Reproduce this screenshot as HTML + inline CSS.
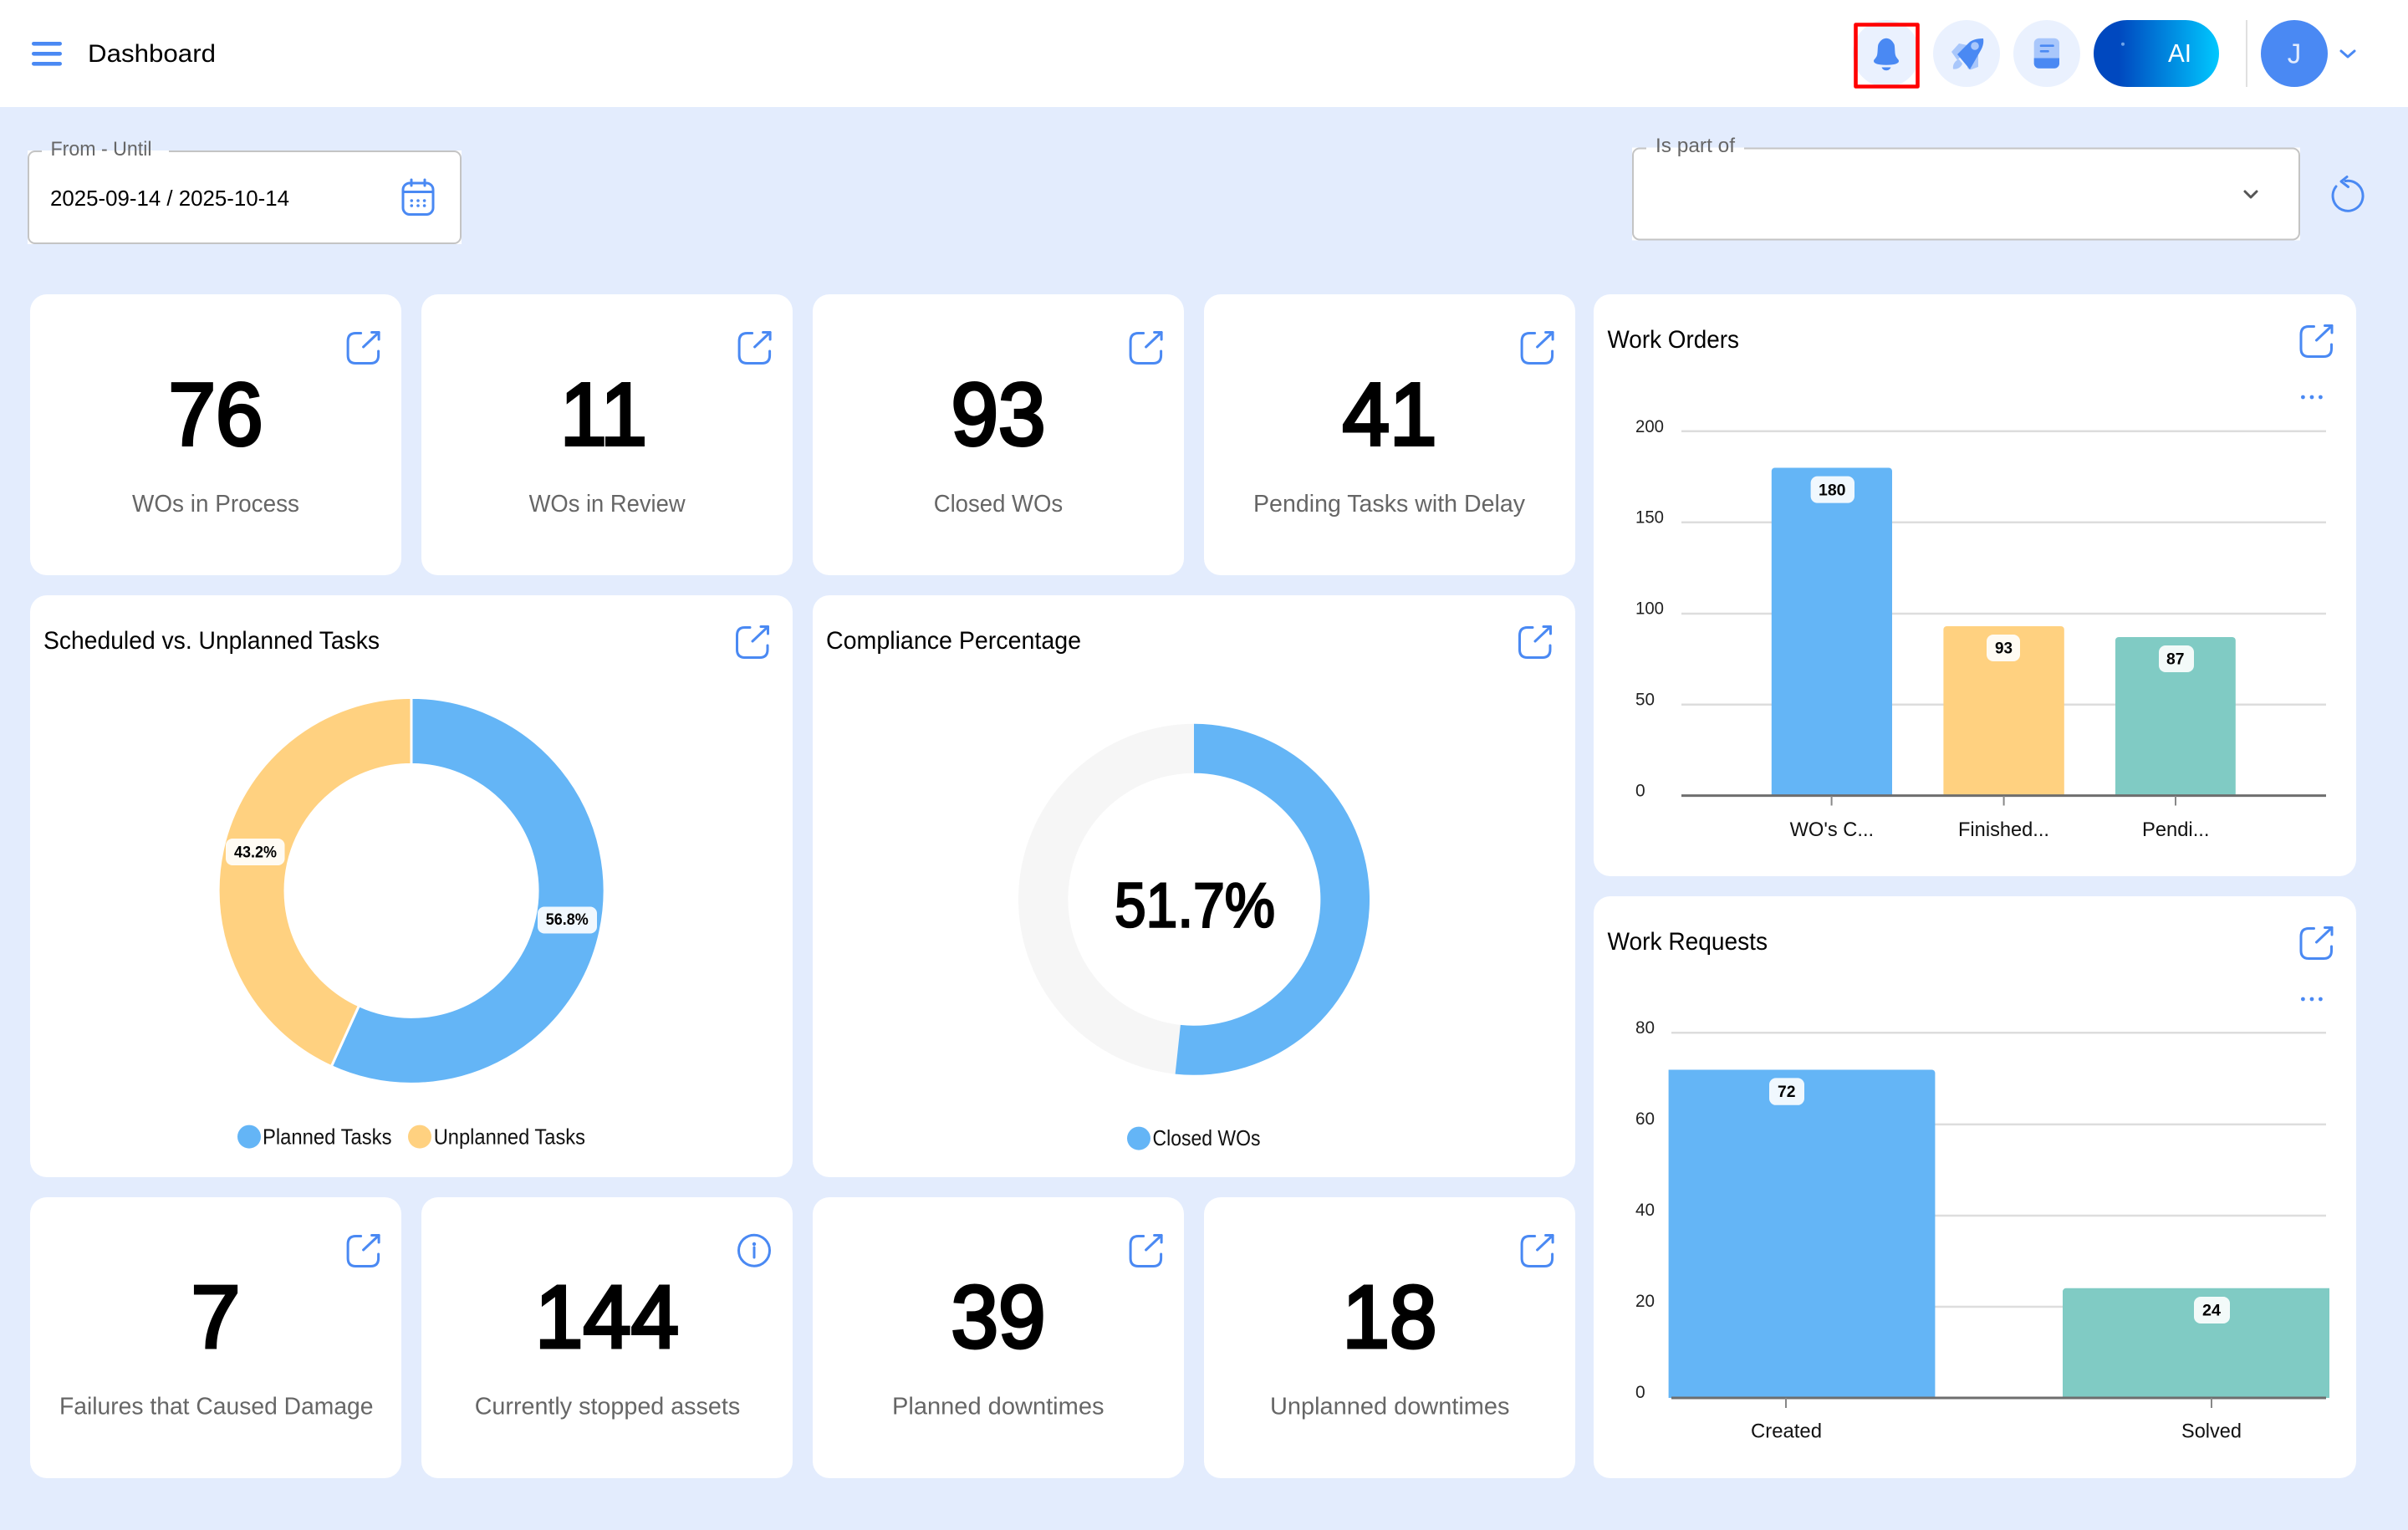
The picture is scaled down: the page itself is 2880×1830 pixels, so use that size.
<!DOCTYPE html>
<html><head><meta charset="utf-8"><title>Dashboard</title>
<style>
html,body{margin:0;padding:0;width:2880px;height:1830px;overflow:hidden;background:#E3ECFD}
svg{display:block}
text{font-family:"Liberation Sans",sans-serif;fill:#000}
.num{font-size:106px;font-weight:400;text-anchor:middle;stroke:#000;stroke-width:4}
.lab{font-size:29px;fill:#666;text-anchor:start}
.ttl{font-size:30px}
.y{font-size:21px;fill:#222}
.x{font-size:24px;fill:#111}
.v{font-size:19.5px;font-weight:700}
.leg{font-size:26px;fill:#111}
.ic{fill:none;stroke:#4A89F3;stroke-width:3;stroke-linecap:round;stroke-linejoin:round}
.grid{stroke:#DDDDDD;stroke-width:2.5}
.tick{stroke:#888;stroke-width:2}
.chip{fill:#fff;fill-opacity:.9}
</style></head><body>
<svg width="2880" height="1830" viewBox="0 0 2880 1830" xmlns="http://www.w3.org/2000/svg">
<defs>
<linearGradient id="ai" x1="0" y1="0" x2="1" y2="0"><stop offset=".2" stop-color="#0048BF"/><stop offset="1" stop-color="#00C8FF"/></linearGradient>
<g id="ext" class="ic"><path d="M17,2.5H11Q1.5,2.5 1.5,12V29Q1.5,38.5 11,38.5H28.5Q38,38.5 38,29V24"/><path d="M20,19L38.5,1.5"/><path d="M30,1.5H38.5V10"/></g>
</defs>

<!-- header -->
<rect width="2880" height="128" fill="#fff"/>
<g fill="#4A89F3"><rect x="38" y="50" width="36" height="4.6" rx="2.3"/><rect x="38" y="62" width="36" height="4.6" rx="2.3"/><rect x="38" y="74" width="36" height="4.6" rx="2.3"/></g>
<text x="105" y="74" font-size="30" textLength="153" lengthAdjust="spacingAndGlyphs">Dashboard</text>

<circle cx="2256" cy="64" r="40" fill="#EAF1FE"/>
<path d="M2256,45.7C2251,45.7 2248,50 2246.5,53C2245.5,56 2246,62 2245,66C2244,69.5 2241,71 2241,73C2241,76 2246,77.7 2256,77.7C2266,77.7 2271,76 2271,73C2271,71 2268,69.5 2267,66C2266,62 2266.5,56 2265.5,53C2264,50 2261,45.7 2256,45.7Z" fill="#4A89F3"/>
<path d="M2250.5,80.5H2261.5C2260.5,83 2258.5,84.2 2256,84.2C2253.5,84.2 2251.5,83 2250.5,80.5Z" fill="#4A89F3"/>
<rect x="2219.5" y="29.5" width="74" height="74" fill="none" stroke="#FF0000" stroke-width="4.6" stroke-linejoin="round"/>

<circle cx="2352" cy="64" r="40" fill="#EAF1FE"/>
<path d="M2334,62L2343,52L2358,55L2341,72Z M2353,79L2366,66L2366,80L2358,83C2355,84 2353,82 2353,79Z M2336,82.5C2335,76 2340,71.5 2343,71L2347,76C2346,80 2341,83.5 2336,82.5Z" fill="#A9C7FB"/>
<path d="M2372,46C2364,46 2358,48 2355,51L2341,65L2356,83L2368,62C2371,57 2373,52 2372,46Z" fill="#4A89F3"/>
<circle cx="2362" cy="55" r="4.8" fill="#A9C7FB"/>

<circle cx="2448" cy="64" r="40" fill="#EAF1FE"/>
<rect x="2432.7" y="45.7" width="30.3" height="36" rx="6" fill="#A9C7FB"/>
<path d="M2432.7,69.5H2463V75.7A6,6 0 0 1 2457,81.7H2438.7A6,6 0 0 1 2432.7,75.7Z" fill="#4A89F3"/>
<path d="M2441,54.7H2455.5M2441,61.3H2449.5" stroke="#4A89F3" stroke-width="2.6" stroke-linecap="round"/>

<rect x="2504" y="24" width="150" height="80" rx="40" fill="url(#ai)"/>
<circle cx="2539" cy="52.7" r="2" fill="#6FA4E8"/>
<text x="2593" y="74" font-size="31" style="fill:#fff" textLength="28" lengthAdjust="spacingAndGlyphs">AI</text>
<rect x="2686" y="24" width="2" height="80" fill="#E0E0E0"/>
<circle cx="2744" cy="64" r="40" fill="#4A89F3"/>
<text x="2744" y="75.5" font-size="33" style="fill:#E3ECFD" text-anchor="middle">J</text>
<path d="M2800,61L2808,68L2816,61" fill="none" stroke="#4A89F3" stroke-width="3" stroke-linecap="round" stroke-linejoin="round"/>

<!-- filters -->
<rect x="33" y="180" width="519" height="112" fill="#fff"/>
<rect x="34" y="181" width="517" height="110" rx="8" fill="#fff" stroke="#C4C4C4" stroke-width="2"/>
<rect x="50" y="178" width="152" height="6" fill="#fff"/>
<rect x="50" y="178" width="152" height="2" fill="#E3ECFD"/>
<text x="60.5" y="186" class="lab" style="font-size:24px" textLength="121" lengthAdjust="spacingAndGlyphs">From - Until</text>
<text x="60" y="246" font-size="26" textLength="286" lengthAdjust="spacingAndGlyphs">2025-09-14 / 2025-10-14</text>
<g class="ic"><rect x="482" y="219" width="36" height="37.5" rx="8"/><path d="M482,229.5H518M492,215V222M508,215V222"/></g>
<g fill="#4A89F3"><circle cx="492.3" cy="240" r="1.8"/><circle cx="500" cy="240" r="1.8"/><circle cx="507.6" cy="240" r="1.8"/><circle cx="492.3" cy="246" r="1.8"/><circle cx="500" cy="246" r="1.8"/><circle cx="507.6" cy="246" r="1.8"/></g>

<rect x="1952" y="176.5" width="799" height="111" fill="#fff"/>
<rect x="1953" y="177.5" width="797" height="109" rx="8" fill="#fff" stroke="#C4C4C4" stroke-width="2"/>
<rect x="1969" y="176.5" width="117" height="4" fill="#fff"/>
<text x="1980" y="182" class="lab" style="font-size:24px" textLength="95" lengthAdjust="spacingAndGlyphs">Is part of</text>
<path d="M2685,229L2692,236L2699,229" fill="none" stroke="#555" stroke-width="3" stroke-linecap="round" stroke-linejoin="round"/>
<g class="ic"><path d="M2794,223A18,18 0 1 0 2805,216.5"/><path d="M2807,211.5L2800,217L2808.5,223.5"/></g>

<!-- cards -->
<g fill="#fff">
<rect x="36" y="352" width="444" height="336" rx="20"/><rect x="504" y="352" width="444" height="336" rx="20"/><rect x="972" y="352" width="444" height="336" rx="20"/><rect x="1440" y="352" width="444" height="336" rx="20"/>
<rect x="36" y="712" width="912" height="696" rx="20"/><rect x="972" y="712" width="912" height="696" rx="20"/>
<rect x="36" y="1432" width="444" height="336" rx="20"/><rect x="504" y="1432" width="444" height="336" rx="20"/><rect x="972" y="1432" width="444" height="336" rx="20"/><rect x="1440" y="1432" width="444" height="336" rx="20"/>
<rect x="1906" y="352" width="912" height="696" rx="20"/><rect x="1906" y="1072" width="912" height="696" rx="20"/>
</g>
<use href="#ext" x="414.6" y="396"/><use href="#ext" x="882.6" y="396"/><use href="#ext" x="1350.6" y="396"/><use href="#ext" x="1818.6" y="396"/>
<use href="#ext" x="414.6" y="1476"/><use href="#ext" x="1350.6" y="1476"/><use href="#ext" x="1818.6" y="1476"/>
<g class="ic"><circle cx="902" cy="1495.7" r="18.5"/><path d="M902,1492V1504"/></g><circle cx="902" cy="1488" r="2.2" fill="#4A89F3"/>
<use href="#ext" x="880" y="748"/><use href="#ext" x="1816" y="748"/><use href="#ext" x="2750.5" y="388"/><use href="#ext" x="2750.5" y="1108"/>

<text x="258" y="532" class="num" textLength="113" lengthAdjust="spacingAndGlyphs">76</text>
<text x="722" y="532" class="num" textLength="104" lengthAdjust="spacingAndGlyphs">11</text>
<text x="1194" y="532" class="num" textLength="113" lengthAdjust="spacingAndGlyphs">93</text>
<text x="1662" y="532" class="num" textLength="113" lengthAdjust="spacingAndGlyphs">41</text>
<text x="258" y="1611.5" class="num">7</text>
<text x="726" y="1611.5" class="num" textLength="172" lengthAdjust="spacingAndGlyphs">144</text>
<text x="1194" y="1611.5" class="num" textLength="113" lengthAdjust="spacingAndGlyphs">39</text>
<text x="1662" y="1611.5" class="num" textLength="113" lengthAdjust="spacingAndGlyphs">18</text>

<text x="158" y="612" class="lab" textLength="200" lengthAdjust="spacingAndGlyphs">WOs in Process</text>
<text x="632.6" y="612" class="lab" textLength="187" lengthAdjust="spacingAndGlyphs">WOs in Review</text>
<text x="1116.7" y="612" class="lab" textLength="154.5" lengthAdjust="spacingAndGlyphs">Closed WOs</text>
<text x="1499" y="612" class="lab" textLength="325" lengthAdjust="spacingAndGlyphs">Pending Tasks with Delay</text>
<text x="71" y="1691.6" class="lab" textLength="375.5" lengthAdjust="spacingAndGlyphs">Failures that Caused Damage</text>
<text x="567.7" y="1691.6" class="lab" textLength="317.5" lengthAdjust="spacingAndGlyphs">Currently stopped assets</text>
<text x="1067" y="1691.6" class="lab" textLength="253.5" lengthAdjust="spacingAndGlyphs">Planned downtimes</text>
<text x="1519" y="1691.6" class="lab" textLength="286.5" lengthAdjust="spacingAndGlyphs">Unplanned downtimes</text>

<!-- titles -->
<text x="52" y="776" class="ttl" textLength="402" lengthAdjust="spacingAndGlyphs">Scheduled vs. Unplanned Tasks</text>
<text x="988" y="776" class="ttl" textLength="305" lengthAdjust="spacingAndGlyphs">Compliance Percentage</text>
<text x="1922.5" y="416" class="ttl" textLength="157.5" lengthAdjust="spacingAndGlyphs">Work Orders</text>
<text x="1922.5" y="1136" class="ttl" textLength="191.5" lengthAdjust="spacingAndGlyphs">Work Requests</text>

<!-- donut 1 -->
<path d="M492,834.4A231,231 0 1 1 396.3,1275.6L429.4,1202.8A151,151 0 1 0 492,914.4Z" fill="#64B5F6" stroke="#fff" stroke-width="3"/>
<path d="M396.3,1275.6A231,231 0 0 1 492,834.4L492,914.4A151,151 0 0 0 429.4,1202.8Z" fill="#FFD180" stroke="#fff" stroke-width="3"/>
<rect x="270" y="1003" width="70.5" height="32" rx="8" class="chip"/>
<text x="280" y="1025.5" class="v" textLength="51" lengthAdjust="spacingAndGlyphs">43.2%</text>
<rect x="643" y="1084.5" width="71" height="32" rx="8" class="chip"/>
<text x="652.8" y="1106.2" class="v" textLength="51" lengthAdjust="spacingAndGlyphs">56.8%</text>
<circle cx="298" cy="1359.6" r="14" fill="#64B5F6"/>
<text x="314" y="1368.5" class="leg" textLength="154.5" lengthAdjust="spacingAndGlyphs">Planned Tasks</text>
<circle cx="502" cy="1359.6" r="14" fill="#FFD180"/>
<text x="518.7" y="1368.5" class="leg" textLength="181.3" lengthAdjust="spacingAndGlyphs">Unplanned Tasks</text>

<!-- donut 2 -->
<path d="M1428,865.8A210,210 0 0 0 1405.6,1284.6L1411.9,1225.9A151,151 0 0 1 1428,924.8Z" fill="#F6F6F6"/>
<path d="M1428,865.8A210,210 0 1 1 1405.6,1284.6L1411.9,1225.9A151,151 0 1 0 1428,924.8Z" fill="#64B5F6"/>
<text x="1333" y="1108.5" font-size="75" stroke="#000" stroke-width="2.6" textLength="192" lengthAdjust="spacingAndGlyphs">51.7%</text>
<circle cx="1362" cy="1361.6" r="14" fill="#64B5F6"/>
<text x="1378.5" y="1370" class="leg" textLength="129" lengthAdjust="spacingAndGlyphs">Closed WOs</text>

<!-- work orders -->
<g fill="#4A89F3"><circle cx="2754.4" cy="475" r="2.4"/><circle cx="2765" cy="475" r="2.4"/><circle cx="2775.4" cy="475" r="2.4"/><circle cx="2754.4" cy="1195" r="2.4"/><circle cx="2765" cy="1195" r="2.4"/><circle cx="2775.4" cy="1195" r="2.4"/></g>
<path class="grid" d="M2011,515.8H2782M2011,624.7H2782M2011,734H2782M2011,842.8H2782"/>
<text x="1956" y="516.8" class="y" textLength="34" lengthAdjust="spacingAndGlyphs">200</text>
<text x="1956" y="625.6" class="y" textLength="34" lengthAdjust="spacingAndGlyphs">150</text>
<text x="1956" y="734.5" class="y" textLength="34" lengthAdjust="spacingAndGlyphs">100</text>
<text x="1956" y="843.7" class="y" textLength="23" lengthAdjust="spacingAndGlyphs">50</text>
<text x="1956" y="952.5" class="y">0</text>
<path d="M2118.8,951.6V563.5a4,4 0 0 1 4,-4H2259a4,4 0 0 1 4,4V951.6Z" fill="#64B5F6"/>
<path d="M2324.4,951.6V753a4,4 0 0 1 4,-4H2464.8a4,4 0 0 1 4,4V951.6Z" fill="#FFD180"/>
<path d="M2530,951.6V766a4,4 0 0 1 4,-4H2669.8a4,4 0 0 1 4,4V951.6Z" fill="#80CBC4"/>
<path d="M2011,951.6H2782" stroke="#6E6E6E" stroke-width="3"/>
<path class="tick" d="M2190.6,952V963.5M2396.6,952V963.5M2602,952V963.5"/>
<rect x="2165.6" y="569.6" width="52.4" height="32" rx="8" class="chip"/>
<text x="2175" y="592.5" class="v" textLength="32.5" lengthAdjust="spacingAndGlyphs">180</text>
<rect x="2376" y="759" width="40" height="32" rx="8" class="chip"/>
<text x="2386" y="781.5" class="v" textLength="21" lengthAdjust="spacingAndGlyphs">93</text>
<rect x="2582" y="772" width="42" height="32" rx="8" class="chip"/>
<text x="2591" y="794.5" class="v" textLength="21.5" lengthAdjust="spacingAndGlyphs">87</text>
<text x="2140.6" y="1000" class="x" textLength="100.5" lengthAdjust="spacingAndGlyphs">WO's C...</text>
<text x="2342" y="1000" class="x" textLength="109" lengthAdjust="spacingAndGlyphs">Finished...</text>
<text x="2562" y="1000" class="x" textLength="80.5" lengthAdjust="spacingAndGlyphs">Pendi...</text>

<!-- work requests -->
<path class="grid" d="M1999,1235.3H2782M1999,1344.9H2782M1999,1454H2782M1999,1563H2782"/>
<text x="1956" y="1236" class="y" textLength="23" lengthAdjust="spacingAndGlyphs">80</text>
<text x="1956" y="1345" class="y" textLength="23" lengthAdjust="spacingAndGlyphs">60</text>
<text x="1956" y="1454" class="y" textLength="23" lengthAdjust="spacingAndGlyphs">40</text>
<text x="1956" y="1563" class="y" textLength="23" lengthAdjust="spacingAndGlyphs">20</text>
<text x="1956" y="1672" class="y">0</text>
<path d="M1995.6,1672V1279.5H2310.4a4,4 0 0 1 4,4V1672Z" fill="#64B5F6"/>
<path d="M2467,1672V1544.8a4,4 0 0 1 4,-4H2786V1672Z" fill="#80CBC4"/>
<path d="M1999,1672H2782" stroke="#6E6E6E" stroke-width="3"/>
<path class="tick" d="M2136,1672V1684M2645,1672V1684"/>
<rect x="2116" y="1289.4" width="42" height="32.4" rx="8" class="chip"/>
<text x="2126" y="1312" class="v" textLength="21.5" lengthAdjust="spacingAndGlyphs">72</text>
<rect x="2624" y="1551" width="43" height="32" rx="8" class="chip"/>
<text x="2634" y="1573.3" class="v" textLength="22" lengthAdjust="spacingAndGlyphs">24</text>
<text x="2094" y="1719.6" class="x" textLength="85" lengthAdjust="spacingAndGlyphs">Created</text>
<text x="2609" y="1719.6" class="x" textLength="72" lengthAdjust="spacingAndGlyphs">Solved</text>
</svg>
</body></html>
